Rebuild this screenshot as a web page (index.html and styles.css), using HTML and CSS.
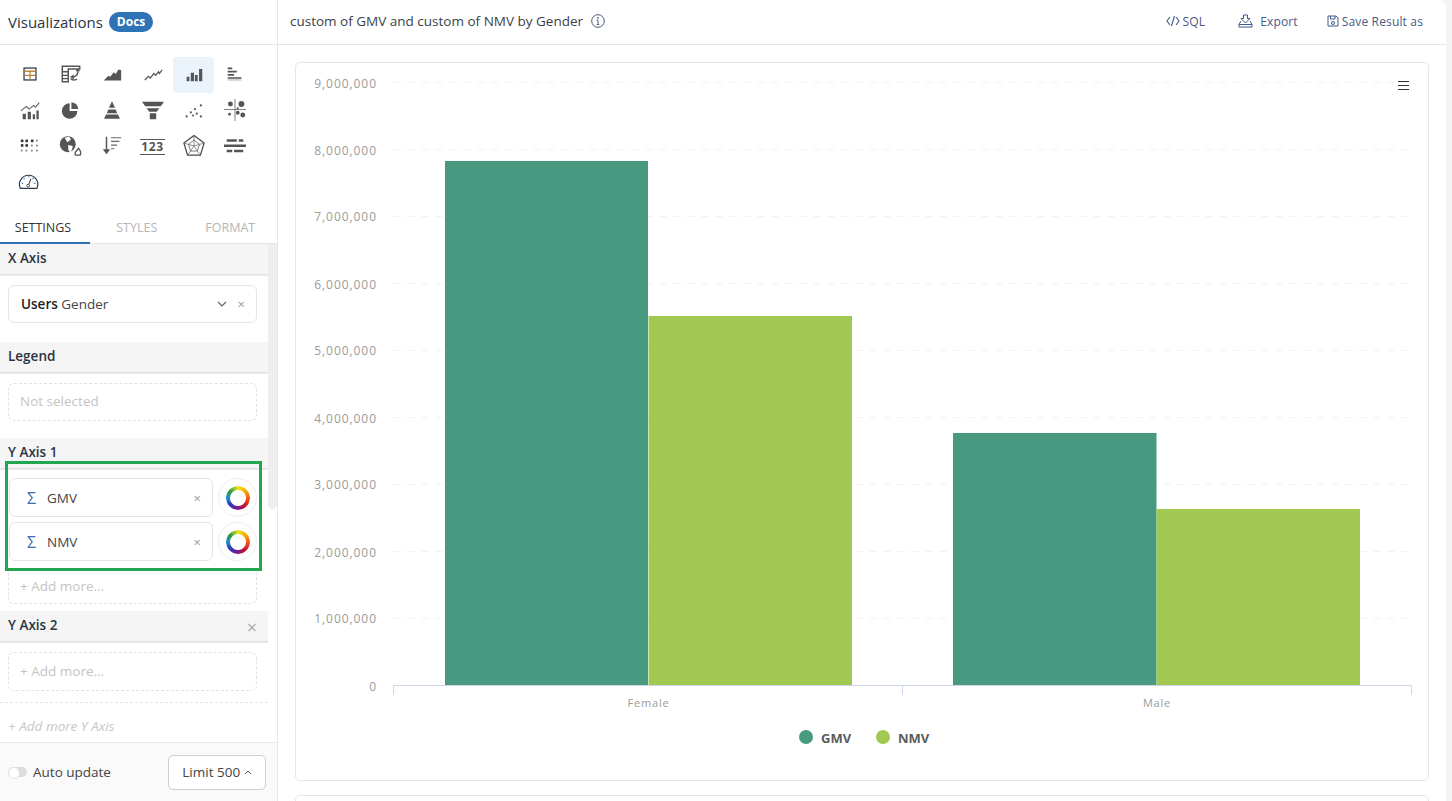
FILE: index.html
```html
<!DOCTYPE html>
<html lang="en">
<head>
  <meta charset="UTF-8">
  <title>Visualizations</title>
  <link rel="stylesheet" href="styles.css">
</head>
<body>
  <div class="app">
    <aside class="sidebar">
      <div class="side-title">
        <span>Visualizations</span>
        <a class="docs-badge">Docs</a>
      </div>

      <div class="viz-grid">
        <div class="viz-cell"><svg viewBox="0 0 24 24"><rect x="5.500" y="5.500" width="13" height="13" fill="none" stroke="#333d4e" stroke-width="1.400"/><path d="M6 9h12" stroke="#c48a3c" stroke-width="1.800"/><path d="M12 9v9M6 13.500h12" stroke="#b9803a" stroke-width="1.300"/></svg></div>
        <div class="viz-cell"><svg viewBox="0 0 24 24"><path d="M2.500 3.500h19v3H9v14H2.500z" fill="none" stroke="#555" stroke-width="1.600"/><path d="M3 9.500h6M3 13.500h6M3 17h6" stroke="#555" stroke-width="1.500"/><path d="M19.500 9c0 3.500-2 5.500-5 6.500M11.500 17c2 2 4.500 2 7 .5" fill="none" stroke="#555" stroke-width="1.600"/><path d="M17 9h5l-2.500-3.500zM15 12.500v5.500l-4-3z" fill="#555"/></svg></div>
        <div class="viz-cell"><svg viewBox="0 0 24 24"><path d="M3 19l5-5 2 1 4-5 2 2 3-5 3 1v11z" fill="#555"/></svg></div>
        <div class="viz-cell"><svg viewBox="0 0 24 24"><path d="M3 18.500l4-4 2 2 4-5 2 2 3-4 1 2 3-4" fill="none" stroke="#555" stroke-width="1.400"/></svg></div>
        <div class="viz-cell viz-cell-active"><svg viewBox="0 0 24 24"><path d="M4 15h3v5H4zM8.500 10.500H12V20H8.500zM13 13h3v7h-3zM17.500 6.500H21V20h-3.500z" fill="#555"/></svg></div>
        <div class="viz-cell"><svg viewBox="0 0 24 24"><path d="M4 5h5v1.800H4zM4 8.500h10v1.800H4zM4 12h7v1.800H4zM4 15.500h15v1.800H4z" fill="#555"/><path d="M4 18.500h15" stroke="#aaa"/></svg></div>

        <div class="viz-cell"><svg viewBox="0 0 24 24"><path d="M4 16h3.500v6H4zM9.500 14H13v8H9.500zM15 16.500h2.500V22H15zM19 12.500h2.500V22H19z" fill="#555"/><path d="M2 13l6-5 3 3 5-4 2 2 4-5" fill="none" stroke="#555" stroke-width="1.100"/></svg></div>
        <div class="viz-cell"><svg viewBox="0 0 24 24"><path d="M10.500 4.500v8.500h8.500a8.500 8.500 0 1 1-8.500-8.500z" fill="#555"/><path d="M12.500 3.500a8.500 8.500 0 0 1 7.500 7.500h-7.500z" fill="#555"/></svg></div>
        <div class="viz-cell"><svg viewBox="0 0 24 24"><path d="M12 2.500l3.300 7H8.700zM8 11.500h8l1.700 4H6.300zM5.500 17h13l2.200 4.500H3.300z" fill="#555"/></svg></div>
        <div class="viz-cell"><svg viewBox="0 0 24 24"><path d="M0 3h24l-3.500 5h-17zM5 10h14l-3 4H8zM8.500 15.500h7V22h-7z" fill="#555"/></svg></div>
        <div class="viz-cell"><svg viewBox="0 0 24 24"><g fill="#555"><circle cx="4" cy="19" r="1.200"/><circle cx="8.500" cy="14.500" r="1.200"/><circle cx="11" cy="18" r="1.200"/><circle cx="15" cy="16" r="1.200"/><circle cx="19.500" cy="19" r="1.200"/><circle cx="19.500" cy="7" r="1.200"/><circle cx="13" cy="11" r="1.200"/></g></svg></div>
        <div class="viz-cell"><svg viewBox="0 0 24 24"><path d="M12 0v24M0 11.500h24" stroke="#666" stroke-width=".9"/><g fill="#555"><circle cx="7" cy="5.500" r="2.700"/><circle cx="19" cy="5.500" r="3.200"/><circle cx="15" cy="10" r="1.100"/><circle cx="6" cy="16.500" r="1.600"/><circle cx="15" cy="15" r="2.100"/><circle cx="20.500" cy="17.500" r="2.700"/></g></svg></div>

        <div class="viz-cell"><svg viewBox="0 0 24 24"><g fill="#333"><rect x="2" y="5" width="2.800" height="2.800"/><rect x="7" y="5" width="2.800" height="2.800"/><rect x="13" y="5" width="2.800" height="2.800"/><rect x="2" y="10" width="2.800" height="2.800"/><rect x="7" y="10" width="2.800" height="2.800"/></g><g fill="#888"><rect x="18.500" y="5" width="2" height="2"/><rect x="13" y="10.500" width="2" height="2"/><rect x="18.500" y="10.500" width="2" height="2"/><rect x="2" y="16" width="2" height="2"/><rect x="7" y="16" width="2" height="2"/><rect x="13" y="16" width="2" height="2"/><rect x="18.500" y="16" width="2" height="2"/></g></svg></div>
        <div class="viz-cell"><svg viewBox="0 0 24 24"><circle cx="8.500" cy="10" r="8.700" fill="#555"/><path d="M5 3l5-1 2 3-4 3zM9 11l5 1-1 4-2 3-2-3z" fill="#fff"/><path d="M20 14.500c2 2 3.500 4.500 2 7.500h-5c-1.500-2 0-4 1-4.500z" fill="#fff" stroke="#555" stroke-width="1.500"/></svg></div>
        <div class="viz-cell"><svg viewBox="0 0 24 24"><path d="M6 2v15" stroke="#555" stroke-width="1.600"/><path d="M2 15.500h8L6 21z" fill="#555"/><path d="M11 3h11M11 7h9M11 11h6.500M11 15h3.500" stroke="#666" stroke-width="1.300"/></svg></div>
        <div class="viz-cell viz-cell-num"><span>123</span></div>
        <div class="viz-cell"><svg viewBox="0 0 24 24"><path d="M12 .5l11 8.300L19 22H5L1 8.800z" fill="none" stroke="#4a4a4a" stroke-width="1.400"/><path d="M12 5.500l6 4.500-2.300 7.500H8.300L6 10z" fill="none" stroke="#666" stroke-width=".9"/><path d="M12 1v11M1.500 9l10.500 3 10.500-3M5.500 21.500L12 12l6.500 9.500" fill="none" stroke="#666" stroke-width=".8"/></svg></div>
        <div class="viz-cell"><svg viewBox="0 0 24 24"><path d="M3 4.500h11v2.800H3zM16 4.500h5v2.800h-5zM0 10.300h24v2.800H0zM3 16h6v2.800H3zM11 16h10v2.800H11z" fill="#555"/></svg></div>

        <div class="viz-cell"><svg viewBox="0 0 24 24"><path d="M1.500 19h18A10 10 0 1 0 1.500 19z" fill="none" stroke="#2f3a4c" stroke-width="1.300"/><circle cx="10" cy="16" r="1.500" fill="none" stroke="#444"/><path d="M10.700 14.500l2.300-6" stroke="#444" stroke-width="1.100"/><path d="M3 13.500h1.500M5 8.500h1.500M10 6.200h1.500M14.500 8h1.500M16.500 13.500h1.500" stroke="#2f7bbf" stroke-width="1.200"/></svg></div>
      </div>

      <div class="tabs">
        <div class="tab tab-active">SETTINGS</div>
        <div class="tab">STYLES</div>
        <div class="tab">FORMAT</div>
      </div>

      <div class="panel">
        <div class="panel-scroll">
          <div class="sec-head">X Axis</div>
          <div class="sec-body sec-body-first">
            <div class="field">
              <span class="field-name"><b>Users</b> Gender</span>
              <svg class="chev" viewBox="0 0 10 6"><path d="M1 1l4 4 4-4" fill="none" stroke="#666" stroke-width="1.200"/></svg>
              <span class="x-mark">×</span>
            </div>
          </div>

          <div class="sec-head">Legend</div>
          <div class="sec-body">
            <div class="drop-zone">Not selected</div>
          </div>

          <div class="sec-head">Y Axis 1</div>
          <div class="sec-body sec-body-measures">
            <div class="measure">
              <div class="field field-measure"><span class="sigma">Σ</span><span class="field-name">GMV</span><span class="x-mark">×</span></div>
              <div class="color-btn"><span class="color-ring"></span></div>
            </div>
            <div class="measure">
              <div class="field field-measure"><span class="sigma">Σ</span><span class="field-name">NMV</span><span class="x-mark">×</span></div>
              <div class="color-btn"><span class="color-ring"></span></div>
            </div>
            <div class="drop-zone drop-zone-tucked">+ Add more...</div>
            <div class="green-box"></div>
          </div>

          <div class="sec-head sec-head-gap">Y Axis 2 <span class="sec-close">×</span></div>
          <div class="sec-body sec-body-last">
            <div class="drop-zone drop-zone-tall">+ Add more...</div>
          </div>
          <div class="add-axis">+ Add more Y Axis</div>
        </div>
        <div class="scroll-thumb"></div>
      </div>

      <div class="side-foot">
        <span class="toggle"></span>
        <span class="auto-label">Auto update</span>
        <button class="limit-btn">Limit 500 <svg viewBox="0 0 8 5"><path d="M1 4l3-3 3 3" fill="none" stroke="#555"/></svg></button>
      </div>
    </aside>

    <main class="main">
      <header class="top-bar">
        <div class="chart-title">custom of GMV and custom of NMV by Gender
          <svg class="info" viewBox="0 0 14 14"><circle cx="7" cy="7" r="6.300" fill="none" stroke="#4a5a78"/><path d="M7 6v4.500M5.800 10.500h2.400M5.800 6H7" fill="none" stroke="#4a5a78"/><circle cx="7" cy="3.800" r=".9" fill="#4a5a78"/></svg>
        </div>
        <div class="actions">
          <a class="action action-sql"><svg viewBox="0 0 14 12"><path d="M4 2L1 6l3 4M10 2l3 4-3 4M8.500 1L5.500 11" fill="none" stroke="#3f5a8a" stroke-width="1.100"/></svg>SQL</a>
          <a class="action action-export"><svg viewBox="0 0 15 14"><path d="M5.500 1h4v3.500H12L7.500 9 3 4.500h2.500z" fill="none" stroke="#3f5a8a"/><path d="M3 7L1 10.500V13h13v-2.500L12 7M1 10.500h13" fill="none" stroke="#3f5a8a"/></svg>Export</a>
          <a class="action action-save"><svg viewBox="0 0 12 12"><path d="M1 1h8l2 2v8H1z" fill="none" stroke="#3f5a8a"/><path d="M3.500 1v3h4.500V1" fill="none" stroke="#3f5a8a"/><circle cx="6" cy="8" r="1.500" fill="none" stroke="#3f5a8a"/></svg>Save Result as</a>
        </div>
      </header>

      <div class="content">
        <section class="chart-card">
          <svg class="chart" viewBox="295 62 1133 718" width="1133" height="718">
            <g class="grid">
              <path d="M393 82.500h1019M393 149.500h1019M393 216.500h1019M393 283.500h1019M393 350.500h1019M393 417.500h1019M393 484.500h1019M393 551.500h1019M393 618.500h1019"/>
            </g>
            <g class="y-labels">
              <text x="377" y="88">9,000,000</text>
              <text x="377" y="155">8,000,000</text>
              <text x="377" y="221">7,000,000</text>
              <text x="377" y="289">6,000,000</text>
              <text x="377" y="355">5,000,000</text>
              <text x="377" y="423">4,000,000</text>
              <text x="377" y="489">3,000,000</text>
              <text x="377" y="557">2,000,000</text>
              <text x="377" y="623">1,000,000</text>
              <text x="377" y="691">0</text>
            </g>
            <rect class="bar-gmv" x="445" y="161" width="203" height="524"/>
            <rect class="bar-nmv" x="648.500" y="316" width="203.500" height="369"/>
            <rect class="bar-gmv" x="953" y="433" width="203.500" height="252"/>
            <rect class="bar-nmv" x="1156.500" y="509" width="203.500" height="176"/>
            <path class="axis" d="M393.500 695V685.500H1411.500V695M902.500 685V695"/>
            <g class="x-labels">
              <text x="648.500" y="707">Female</text>
              <text x="1157" y="707">Male</text>
            </g>
            <circle class="bar-gmv" cx="806" cy="737" r="7"/>
            <text class="legend-text" x="821" y="743">GMV</text>
            <circle class="bar-nmv" cx="883" cy="737" r="7"/>
            <text class="legend-text" x="898" y="743">NMV</text>
            <path class="burger" d="M1398 81.500h11M1398 85.500h11M1398 89.500h11"/>
          </svg>
        </section>
        <section class="next-card"></section>
      </div>
    </main>
  </div>
</body>
</html>
```

FILE: styles.css
```css
* {
  box-sizing: border-box;
}

html, body {
  margin: 0;
  height: 100%;
  overflow: hidden;
}

body {
  background: #f4f4f4;
  font-family: "Open Sans", "Liberation Sans", sans-serif;
  font-size: 13.500px;
  color: #333;
}

.app {
  display: flex;
  width: 1446px;
  height: 801px;
  background: #fff;
  border-top-right-radius: 8px;
  overflow: hidden;
}

/* left column */
.sidebar {
  width: 278px;
  flex: none;
  display: flex;
  flex-direction: column;
  border-right: 1px solid #e6e6e6;
}

.side-title {
  height: 45px;
  flex: none;
  display: flex;
  align-items: center;
  gap: 6px;
  padding: 0 8px;
  border-bottom: 1px solid #e6e6e6;
  font-size: 15px;
  color: #2c3442;
}

.docs-badge {
  background: #2d73b5;
  color: #fff;
  font-size: 12px;
  font-weight: 700;
  line-height: 20px;
  padding: 0 8px;
  border-radius: 10px;
}

.viz-grid {
  display: grid;
  grid-template-columns: repeat(6, 41px);
  grid-auto-rows: 36px;
  padding: 12px 0 0 9px;
  height: 166px;
  flex: none;
}

.viz-cell {
  display: flex;
  align-items: center;
  justify-content: center;
  border-radius: 4px;
}

.viz-cell svg {
  width: 22px;
  height: 22px;
  margin-bottom: 2px;
  overflow: visible;
}

.viz-cell-active {
  background: #eaf2fa;
}

.viz-cell-num span {
  border-top: 1px solid #555;
  border-bottom: 1px solid #555;
  font-size: 12px;
  font-weight: 700;
  line-height: 14px;
  letter-spacing: 0.6px;
  color: #555;
  padding: 0 1px;
}

.tabs {
  display: flex;
  height: 33px;
  flex: none;
  border-bottom: 1px solid #e6e6e6;
}

.tab {
  flex: 1;
  text-align: center;
  font-size: 12.500px;
  line-height: 34px;
  color: #b5b5b5;
}

.tab-active {
  color: #333;
  border-bottom: 2px solid #2d73b5;
  height: 33px;
  flex: none;
  width: 90px;
  padding-right: 4px;
}

.panel {
  flex: 1;
  min-height: 0;
  position: relative;
  overflow: hidden;
}

.panel-scroll {
  width: 268px;
}

.sec-head {
  height: 31px;
  background: #f5f5f5;
  border-bottom: 1px solid #e2e2e2;
  box-shadow: 0 1px 1px #eee;
  padding: 0 8px;
  font-size: 13.500px;
  font-weight: 600;
  line-height: 28px;
  color: #2c3442;
  position: relative;
}

.sec-head-gap {
  margin-top: 7px;
}

.sec-close {
  position: absolute;
  right: 11px;
  top: 2px;
  font-size: 18px;
  font-weight: 400;
  color: #aaa;
}

.sec-body {
  padding: 10px 11px 17px 8px;
}

.sec-body-first {
  padding-bottom: 19px;
}

.sec-body-measures {
  position: relative;
  padding: 9px 11px 0 9px;
}

.sec-body-last {
  padding-bottom: 11px;
  border-bottom: 1px dashed #e6e6e6;
}

.field {
  height: 38px;
  border: 1px solid #e4e4e4;
  border-radius: 6px;
  display: flex;
  align-items: center;
  padding: 0 11px 0 12px;
  background: #fff;
}

.field-name {
  flex: 1;
  color: #444;
}

.field-name b {
  font-weight: 600;
  color: #222;
}

.chev {
  width: 10px;
  height: 6px;
  margin-right: 11px;
}

.x-mark {
  font-size: 13px;
  color: #999;
}

.drop-zone {
  height: 38px;
  border: 1px dashed #e2e2e2;
  border-radius: 6px;
  padding-left: 11px;
  line-height: 35px;
  color: #c4c4c4;
}

.drop-zone-tall {
  height: 39px;
  line-height: 37px;
}

.drop-zone-tucked {
  height: 41px;
  margin: -3px 0 0 -1px;
  line-height: 44px;
  border-top-color: transparent;
}

.measure {
  display: flex;
  gap: 5px;
  height: 39px;
  margin-bottom: 5px;
}

.field-measure {
  width: 204px;
  height: 39px;
  padding-left: 17px;
}

.sigma {
  width: 20px;
  color: #3b6cb5;
  font-size: 16px;
}

.color-btn {
  width: 39px;
  height: 39px;
  border: 1px solid #eee;
  border-radius: 50%;
  display: flex;
  align-items: center;
  justify-content: center;
}

.color-ring {
  width: 24px;
  height: 24px;
  border-radius: 50%;
  background: conic-gradient(#f2e01e 0deg, #f7a800 50deg, #ef4a1e 100deg, #c8102e 140deg, #6a1b9a 190deg, #2740c0 235deg, #1e90d0 270deg, #2a9a3a 310deg, #a8d020 345deg, #f2e01e 360deg);
  -webkit-mask: radial-gradient(circle, transparent 7.500px, #000 8.500px);
  mask: radial-gradient(circle, transparent 7.500px, #000 8.500px);
}

.green-box {
  position: absolute;
  left: 5px;
  top: -8px;
  width: 257px;
  height: 110px;
  border: 3px solid #22a650;
  pointer-events: none;
}

.add-axis {
  padding: 14px 8px;
  font-style: italic;
  color: #c8c8c8;
}

.scroll-thumb {
  position: absolute;
  right: 0;
  top: 0;
  width: 9px;
  height: 265px;
  background: #eeeeee;
  border-radius: 0 0 5px 5px;
}

.side-foot {
  height: 59px;
  flex: none;
  display: flex;
  align-items: center;
  padding: 0 11px 0 8px;
  background: #fafafa;
  border-top: 1px solid #e6e6e6;
}

.toggle {
  width: 19px;
  height: 10px;
  border-radius: 5px;
  background: #ddd;
  position: relative;
  margin-right: 6px;
}

.toggle::before {
  content: "";
  position: absolute;
  left: 0;
  top: 0;
  width: 10px;
  height: 10px;
  border-radius: 50%;
  background: #fff;
  border: 1px solid #e4e4e4;
}

.auto-label {
  flex: 1;
  color: #444;
}

.limit-btn {
  width: 98px;
  height: 35px;
  border: 1px solid #cfcfcf;
  border-radius: 5px;
  background: #fff;
  font: inherit;
  color: #444;
  padding: 0;
}

.limit-btn svg {
  width: 8px;
  height: 5px;
  vertical-align: 2px;
}

/* right column */
.main {
  flex: 1;
  min-width: 0;
  display: flex;
  flex-direction: column;
}

.top-bar {
  height: 45px;
  flex: none;
  display: flex;
  align-items: center;
  justify-content: space-between;
  padding: 0 23px 2px 12px;
  border-bottom: 1px solid #e6e6e6;
}

.chart-title {
  font-size: 13.500px;
  color: #3a3f4a;
  display: flex;
  align-items: center;
  gap: 8px;
}

.info {
  width: 14px;
  height: 14px;
}

.actions {
  display: flex;
  gap: 29px;
}

.action {
  display: flex;
  align-items: center;
  gap: 3px;
  font-size: 12px;
  letter-spacing: 0.150px;
  color: #475a86;
}

.action svg {
  width: 14px;
  height: 12px;
}

.action-sql {
  margin-right: 4px;
}

.action-export {
  gap: 7px;
}

.action-export svg {
  height: 14px;
  width: 15px;
}

.action-save svg {
  width: 12px;
}

.content {
  flex: 1;
  min-height: 0;
  overflow: hidden;
  padding: 17px 17px 0 17px;
}

.chart-card {
  height: 719px;
  border: 1px solid #e6e6e6;
  border-radius: 5px;
  overflow: hidden;
}

.chart {
  display: block;
  margin: -1px;
}

.next-card {
  height: 40px;
  margin-top: 14px;
  border: 1px solid #e6e6e6;
  border-radius: 5px;
}

.grid path {
  stroke: #f3f3f3;
  stroke-dasharray: 8 6;
  fill: none;
}

.y-labels text {
  text-anchor: end;
  font-size: 12px;
  letter-spacing: 0.950px;
  fill: #9b9b9b;
}

.x-labels text {
  text-anchor: middle;
  font-size: 11px;
  letter-spacing: 0.800px;
  fill: #9b9b9b;
}

.bar-gmv {
  fill: #47997f;
}

.bar-nmv {
  fill: #a1c951;
}

.axis {
  stroke: #ccd6eb;
  fill: none;
}

.legend-text {
  font-size: 13px;
  font-weight: 700;
  fill: #5c5c5c;
}

.burger {
  stroke: #333;
  stroke-width: 1.200;
  fill: none;
}
```
